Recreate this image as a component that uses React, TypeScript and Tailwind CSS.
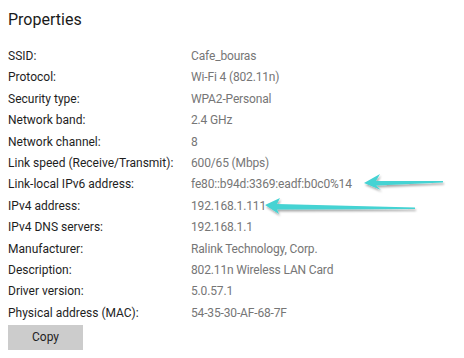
import React from 'react';

const rows: [string, string][] = [
  ['SSID:', 'Cafe_bouras'],
  ['Protocol:', 'Wi-Fi 4 (802.11n)'],
  ['Security type:', 'WPA2-Personal'],
  ['Network band:', '2.4 GHz'],
  ['Network channel:', '8'],
  ['Link speed (Receive/Transmit):', '600/65 (Mbps)'],
  ['Link-local IPv6 address:', 'fe80::b94d:3369:eadf:b0c0%14'],
  ['IPv4 address:', '192.168.1.111'],
  ['IPv4 DNS servers:', '192.168.1.1'],
  ['Manufacturer:', 'Ralink Technology, Corp.'],
  ['Description:', '802.11n Wireless LAN Card'],
  ['Driver version:', '5.0.57.1'],
  ['Physical address (MAC):', '54-35-30-AF-68-7F'],
];

// hand-drawn pointer arrows laid over the list
function Arrows() {
  return (
    <svg className="absolute inset-0 pointer-events-none" width="464" height="358" viewBox="0 0 464 358">
      <defs>
        <filter id="sh" x="-10%" y="-50%" width="120%" height="200%">
          <feDropShadow dx="1" dy="2" stdDeviation="1.2" floodColor="#000" floodOpacity="0.35" />
        </filter>
      </defs>
      <g fill="#45d3d3" filter="url(#sh)">
        <path d="M364 183 L380 174 L376 181 L443 181 L443 182.5 L376 185.5 L381 190 Z" />
        <path d="M265 205 L280 198 L277 204 L415 207.5 L415 209 L277 209.5 L279 214 Z" />
      </g>
    </svg>
  );
}

export default function App() {
  return (
    <div className="relative w-[464px] h-[358px] bg-white overflow-hidden font-[Roboto,sans-serif]">
      <div className="pl-2 pt-[10px]">
        <h1 className="text-[16px] leading-[19px] font-normal text-[#1a1a1a]">Properties</h1>
        <div className="mt-[17px] flex flex-col">
          {rows.map(([k, v]) => (
            <div key={k} className="flex h-[21.4px] items-center text-[12px] leading-[21.4px]">
              <span className="w-[183px] text-[#1e1e1e]">{k}</span>
              <span className="text-[#767676] tracking-[-0.15px]">{v}</span>
            </div>
          ))}
        </div>
        <button className="w-[75px] h-[25px] bg-[#cccccc] text-[12px] text-[#1e1e1e]">Copy</button>
      </div>
      <Arrows />
    </div>
  );
}
